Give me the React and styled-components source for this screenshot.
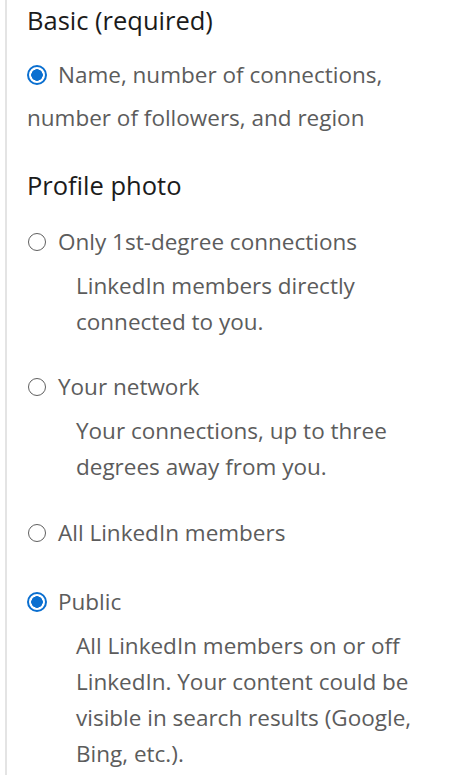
import React from "react";
import styled, { createGlobalStyle } from "styled-components";

const Global = createGlobalStyle`
  html, body { margin: 0; padding: 0; background: #fff; }
  body { font-family: "Open Sans", "Noto Sans", sans-serif; }
`;

const Panel = styled.div`
  margin-left: 5px;
  border-left: 2px solid #e4e4e4;
  padding: 0 0 0 20px;
  min-height: 775px;
  box-sizing: border-box;
`;

const Heading = styled.h2`
  margin: 0;
  font-size: 25.5px;
  font-weight: 400;
  color: #1b1b1b;
  line-height: 40px;
  margin-top: ${(p) => p.$top || 0}px;
`;

const Option = styled.div`
  margin-top: ${(p) => p.$top || 0}px;
`;

const LabelRow = styled.label`
  display: flex;
  align-items: center;
  gap: 11px;
  font-size: 22.5px;
  color: #5c5c5c;
  line-height: 36px;
  white-space: nowrap;
`;

const Radio = styled.span`
  flex: none;
  width: ${(p) => (p.$checked ? 20 : 18)}px;
  height: ${(p) => (p.$checked ? 20 : 18)}px;
  margin: 0 ${(p) => (p.$checked ? 0 : 1)}px;
  box-sizing: border-box;
  border-radius: 50%;
  border: ${(p) => (p.$checked ? "2.5px solid #0a6fd0" : "1.5px solid #5f5f5f")};
  background: ${(p) =>
    p.$checked ? "radial-gradient(circle, #0a6fd0 0 5.5px, #fff 6px)" : "#fff"};
`;

const Desc = styled.p`
  margin: 8px 0 0 49px;
  font-size: 22.5px;
  color: #5c5c5c;
  line-height: 36px;
  white-space: nowrap;
`;

const Wrapped = styled.p`
  margin: 7px 0 0 0;
  font-size: 22.5px;
  color: #5c5c5c;
  line-height: 36px;
  white-space: nowrap;
`;

const options = [
  {
    label: "Only 1st-degree connections",
    desc: ["LinkedIn members directly", "connected to you."],
    top: 19,
  },
  {
    label: "Your network",
    desc: ["Your connections, up to three", "degrees away from you."],
    top: 29,
  },
  { label: "All LinkedIn members", desc: null, top: 30 },
  {
    label: "Public",
    checked: true,
    desc: [
      "All LinkedIn members on or off",
      "LinkedIn. Your content could be",
      "visible in search results (Google,",
      "Bing, etc.).",
    ],
    top: 33,
  },
];

export default function App() {
  return (
    <>
      <Global />
      <Panel>
        <Heading>Basic (required)</Heading>
        <Option $top={17}>
          <LabelRow>
            <Radio $checked />
            Name, number of connections,
          </LabelRow>
          <Wrapped>number of followers, and region</Wrapped>
        </Option>
        <Heading $top={29}>Profile photo</Heading>
        {options.map((o) => (
          <Option key={o.label} $top={o.top}>
            <LabelRow>
              <Radio $checked={o.checked} />
              {o.label}
            </LabelRow>
            {o.desc && (
              <Desc>
                {o.desc.map((l, i) => (
                  <React.Fragment key={i}>
                    {l}
                    {i < o.desc.length - 1 && <br />}
                  </React.Fragment>
                ))}
              </Desc>
            )}
          </Option>
        ))}
      </Panel>
    </>
  );
}
